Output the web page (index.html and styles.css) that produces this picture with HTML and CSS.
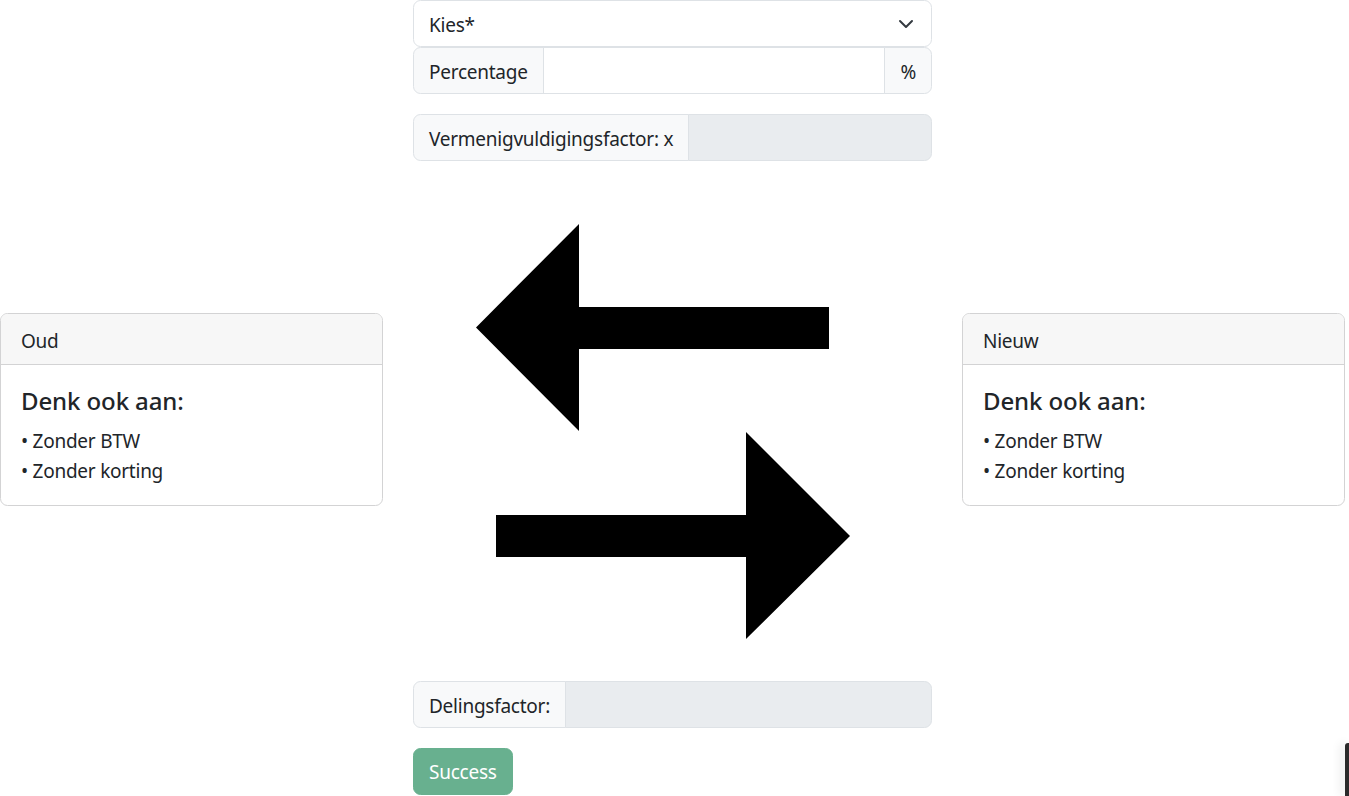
FILE: index.html
```html
<!DOCTYPE html>
<html lang="nl">
<head>
<meta charset="utf-8">
<title>Omrekenen</title>
<link rel="stylesheet" href="styles.css">
</head>
<body>
<div class="page">
  <div class="side">
    <div class="card">
      <div class="card-header">Oud</div>
      <div class="card-body">
        <h5 class="card-title">Denk ook aan:</h5>
        <div class="line">• Zonder BTW</div>
        <div class="line">• Zonder korting</div>
      </div>
    </div>
  </div>

  <div class="center">
    <div class="select">
      <span>Kies*</span>
      <svg class="chev" width="16" height="12" viewBox="0 0 16 12"><path d="m2 3 6 6 6-6" fill="none" stroke="#343a40" stroke-width="2" stroke-linecap="round" stroke-linejoin="round"/></svg>
    </div>
    <div class="input-group">
      <span class="ig-text">Percentage</span>
      <span class="ig-input"></span>
      <span class="ig-text">%</span>
    </div>
    <div class="input-group spaced">
      <span class="ig-text">Vermenigvuldigingsfactor: x</span>
      <span class="ig-input disabled"></span>
    </div>
    <svg class="arrows" width="519" height="520" viewBox="0 0 519 520">
      <polygon points="63,166.5 166,63 166,146 416,146 416,188 166,188 166,270" fill="#000"/>
      <polygon points="437,375 333,271 333,354 83,354 83,396 333,396 333,478" fill="#000"/>
    </svg>
    <div class="input-group">
      <span class="ig-text">Delingsfactor:</span>
      <span class="ig-input disabled"></span>
    </div>
    <button class="btn-success" disabled>Success</button>
  </div>

  <div class="side">
    <div class="card">
      <div class="card-header">Nieuw</div>
      <div class="card-body">
        <h5 class="card-title">Denk ook aan:</h5>
        <div class="line">• Zonder BTW</div>
        <div class="line">• Zonder korting</div>
      </div>
    </div>
  </div>
</div>
<div class="corner-widget"></div>
</body>
</html>
```

FILE: styles.css
```css
* { box-sizing: border-box; }
html, body { margin: 0; padding: 0; }
body {
  font-family: "Noto Sans", "Open Sans", sans-serif;
  font-size: 19px;
  letter-spacing: -0.25px;
  line-height: 30px;
  color: #212529;
  background: #fff;
  width: 1349px;
  height: 796px;
  overflow: hidden;
}
.page {
  display: flex;
  gap: 30px;
  width: 1345px;
}
.side {
  width: 383px;
  flex: none;
  padding-top: 313px;
}
.center {
  width: 519px;
  flex: none;
  display: flex;
  flex-direction: column;
}
.card {
  border: 1px solid #d3d3d4;
  border-radius: 7.5px;
  overflow: hidden;
}
.card-header {
  background: #f7f7f7;
  border-bottom: 1px solid #d3d3d4;
  padding: 12px 20px 8px;
  height: 51px;
}
.card-body {
  padding: 21px 20px 19px;
}
.card-title {
  margin: 0 0 10px;
  font-size: 24px;
  letter-spacing: -0.1px;
  line-height: 30px;
  font-weight: 500;
}
.line { height: 30px; }

.select {
  height: 47px;
  border: 1px solid #dee2e6;
  border-radius: 7.5px;
  padding: 9px 17px 6px 15px;
  display: flex;
  align-items: center;
  justify-content: space-between;
}
.chev { display: block; margin-top: -2px; }
.input-group {
  display: flex;
  height: 47px;
}
.input-group.spaced { margin-top: 20px; }
.ig-text {
  flex: none;
  display: flex;
  align-items: center;
  padding: 9px 15px 6px;
  background: #f8f9fa;
  border: 1px solid #dee2e6;
}
.ig-text:first-child { border-radius: 7.5px 0 0 7.5px; }
.ig-text:last-child { border-radius: 0 7.5px 7.5px 0; margin-left: -1px; }
.ig-input {
  flex: 1;
  border: 1px solid #dee2e6;
  margin-left: -1px;
  background: #fff;
}
.ig-input.disabled {
  background: #e9ecef;
  border-radius: 0 7.5px 7.5px 0;
}
.arrows {
  display: block;
}
.btn-success {
  align-self: flex-start;
  margin-top: 20px;
  height: 47px;
  padding: 8px 15px 7px;
  font-family: inherit;
  font-size: 19px;
  letter-spacing: -0.25px;
  line-height: 30px;
  color: #fff;
  background: #198754;
  border: 1px solid #198754;
  border-radius: 7.5px;
  opacity: 0.65;
}
.corner-widget {
  position: fixed;
  right: 0;
  bottom: 0;
  width: 4px;
  height: 53px;
  background: #2b2b2b;
  border-top-left-radius: 3px;
  box-shadow: -4px 0 10px rgba(0,0,0,0.12);
}
```
